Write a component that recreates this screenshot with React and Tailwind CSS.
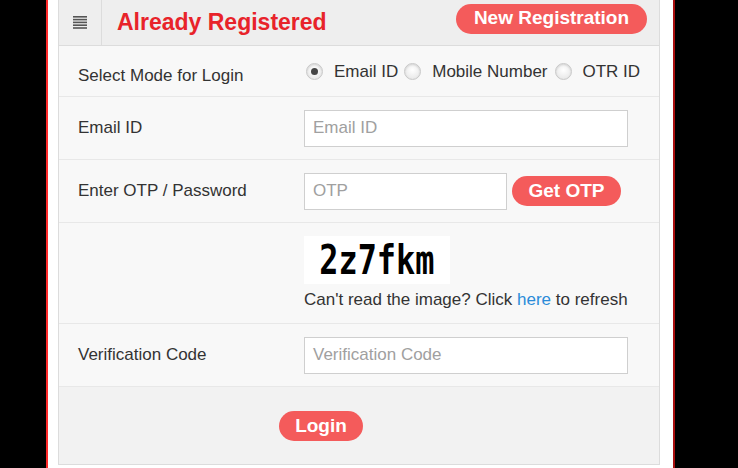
import React from "react";

function Radio({ checked, className = "" }) {
  return (
    <span className={`flex h-[17px] w-[17px] shrink-0 items-center justify-center rounded-full border border-[#c8c8c8] bg-[radial-gradient(circle_at_50%_40%,#ffffff,#e2e2e2)] shadow-[inset_0_1px_2px_rgba(0,0,0,0.12)] ${className}`}>
      {checked && <span className="h-[7px] w-[7px] rounded-full bg-[#444]" />}
    </span>
  );
}

function Row({ label, children, h }) {
  return (
    <div className={`flex items-center border-b border-[#e8e8e8] ${h}`}>
      <div className="w-[245px] shrink-0 pl-[19px] text-[17px] text-[#333]">{label}</div>
      <div className="flex-1">{children}</div>
    </div>
  );
}

export default function App() {
  return (
    <div
      className="flex h-[468px] w-[738px] bg-black"
      style={{ fontFamily: '"Liberation Sans", Arial, sans-serif' }}
    >
      <div className="w-[46px] shrink-0" />
      <div className="flex w-[629px] shrink-0 border-l-2 border-r-2 border-l-[#ff2a2a] border-r-[#a80f0f] bg-white pl-[10px] pr-[13px]">
        <div className="flex h-[465px] w-[603px] flex-col border-x border-b border-[#dcdcdc] bg-[#f8f8f8]">
          {/* header */}
          <div className="flex h-[46px] shrink-0 items-center border-b border-[#dcdcdc] bg-[#eeeeee]">
            <div className="flex h-full w-[43px] items-center justify-center border-r border-[#dcdcdc]">
              <svg width="14" height="13" viewBox="0 0 14 13">
                <g fill="#555">
                  <rect x="0" y="0" width="14" height="1.6" />
                  <rect x="0" y="2.8" width="14" height="1.6" />
                  <rect x="0" y="5.6" width="14" height="1.6" />
                  <rect x="0" y="8.4" width="14" height="1.6" />
                  <rect x="0" y="11.2" width="14" height="1.6" />
                </g>
              </svg>
            </div>
            <div className="ml-[15px] text-[23px] font-bold text-[#e8232a]">Already Registered</div>
            <div className="ml-auto mr-[12px] flex h-[30px] w-[191px] -translate-y-[4px] items-center justify-center rounded-full bg-[#f45b5b] text-[19px] font-bold text-white">
              New Registration
            </div>
          </div>

          {/* row 1 */}
          <Row label={<span className="relative top-[5px]">Select Mode for Login</span>} h="h-[51px]">
            <div className="flex items-center text-[17px] leading-none text-[#333]">
              <Radio checked className="ml-[2px]" />
              <span className="ml-[11px]">Email ID</span>
              <Radio className="ml-[6px]" />
              <span className="ml-[11px]">Mobile Number</span>
              <Radio className="ml-[7px]" />
              <span className="ml-[11px]">OTR ID</span>
            </div>
          </Row>

          {/* row 2 */}
          <Row label="Email ID" h="h-[63px]">
            <div className="flex h-[37px] w-[324px] items-center border border-[#cfcfcf] bg-white pl-[8px] text-[17px] text-[#a0a0a0]">
              Email ID
            </div>
          </Row>

          {/* row 3 */}
          <Row label="Enter OTP / Password" h="h-[63px]">
            <div className="flex items-center">
              <div className="flex h-[37px] w-[203px] items-center border border-[#cfcfcf] bg-white pl-[8px] text-[17px] text-[#a0a0a0]">
                OTP
              </div>
              <div className="ml-[5px] flex h-[30px] w-[109px] items-center justify-center rounded-full bg-[#f45b5b] text-[19px] font-bold text-white">
                Get OTP
              </div>
            </div>
          </Row>

          {/* row 4 captcha */}
          <div className="flex h-[101px] border-b border-[#e8e8e8]">
            <div className="w-[245px] shrink-0" />
            <div className="pt-[13px]">
              <div className="flex h-[48px] w-[146px] items-center justify-center overflow-hidden bg-white">
                <span
                  className="inline-block scale-x-[0.86] scale-y-[1.08] text-[37px] font-bold leading-none text-black"
                  style={{ fontFamily: '"DejaVu Sans Mono", monospace' }}
                >
                  2z7fkm
                </span>
              </div>
              <div className="mt-[3px] text-[17px] text-[#333]">
                Can't read the image? Click <span className="text-[#2a8bd8]">here</span> to refresh
              </div>
            </div>
          </div>

          {/* row 5 */}
          <Row label="Verification Code" h="h-[63px]">
            <div className="flex h-[37px] w-[324px] items-center border border-[#cfcfcf] bg-white pl-[8px] text-[17px] text-[#a0a0a0]">
              Verification Code
            </div>
          </Row>

          {/* footer */}
          <div className="flex flex-1 items-start bg-[#f2f2f2] pl-[220px] pt-[24px]">
            <div className="flex h-[30px] w-[84px] items-center justify-center rounded-full bg-[#f45b5b] text-[19px] font-bold text-white">
              Login
            </div>
          </div>
        </div>
      </div>
      <div className="flex-1" />
    </div>
  );
}
